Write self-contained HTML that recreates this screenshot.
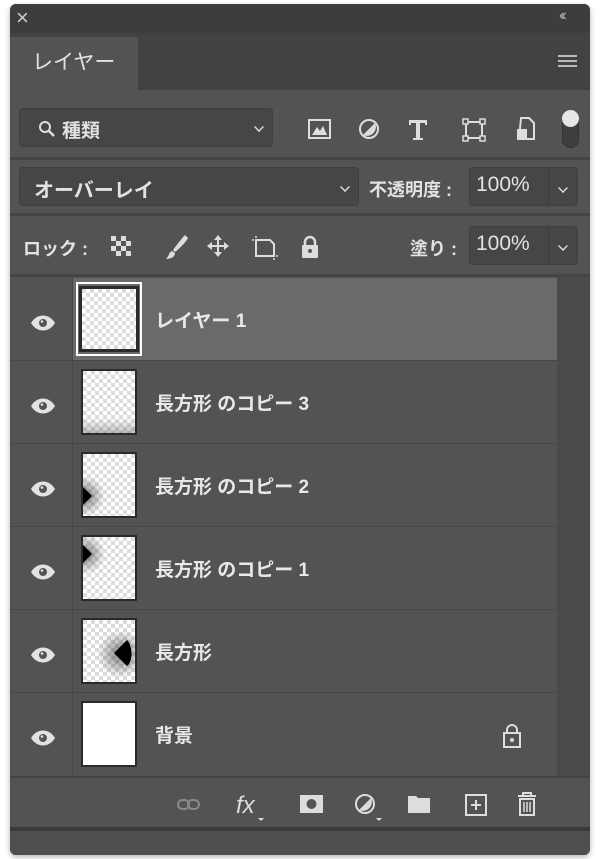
<!DOCTYPE html><html><head><meta charset="utf-8"><style>
*{margin:0;padding:0;box-sizing:border-box}
body{width:600px;height:859px;background:#fff;position:relative;overflow:hidden;font-family:"Liberation Sans","Noto Sans CJK JP",sans-serif;color:#e2e2e2}
.a{position:absolute}
.panel{left:10px;top:4px;width:580px;height:851px;background:#535353;border-radius:6px;overflow:hidden;box-shadow:0 2px 6px rgba(0,0,0,.3)}
.box{background:#464646;border:1px solid #3e3e3e;border-radius:4px}
.chev{width:10px;height:10px;border-right:2px solid #ddd;border-bottom:2px solid #ddd;transform:rotate(45deg) scale(.7)}
.thumb{width:56px;height:66px;border:2px solid #2a2a2a;background:repeating-conic-gradient(#fff 0 25%,#dcdcdc 0 50%) 0 0/8px 8px}
.nm{font-size:19px;left:155px;font-weight:bold;color:#e8e8e8}
.lb{font-weight:bold}
</style></head><body>
<div class="a panel">
 <div class="a" style="left:0;top:0;width:580px;height:29px;background:#3d3d3d"></div>
 <div class="a" style="left:6px;top:1px;font-size:22px;color:#ccc">×</div>
 <div class="a" style="left:549px;top:3px;font-size:16px;color:#bbb;letter-spacing:-3px">‹‹</div>
 <div class="a" style="left:0;top:29px;width:580px;height:57px;background:#424242"></div>
 <div class="a" style="left:0;top:33px;width:128px;height:53px;background:#535353"></div>
 <div class="a" style="left:22px;top:42px;font-size:21px">レイヤー</div>
 <div class="a" style="left:548px;top:51px;width:19px;height:12px;border-top:2px solid #bbb;border-bottom:2px solid #bbb"></div>
 <div class="a" style="left:548px;top:56px;width:19px;height:2px;background:#bbb"></div>
 <!-- row1 -->
 <div class="a box" style="left:9px;top:104px;width:254px;height:39px"></div>
 <svg class="a" style="left:28px;top:116px" width="18" height="18"><circle cx="7" cy="7" r="5" fill="none" stroke="#ddd" stroke-width="2"/><line x1="11" y1="11" x2="16" y2="16" stroke="#ddd" stroke-width="2.5"/></svg>
 <div class="a" style="left:52px;top:112px;font-size:19px;font-weight:bold">種類</div>
 <div class="a chev" style="left:244px;top:118px"></div>
 <svg class="a" style="left:297px;top:110px" width="270" height="40">
  <rect x="2" y="6" width="21" height="18" fill="none" stroke="#ddd" stroke-width="2"/><path d="M5 21l5-8 3 4 3-5 4 9z" fill="#ddd"/>
  <circle cx="62" cy="15" r="9" fill="none" stroke="#ddd" stroke-width="2"/><path d="M68 9a9 9 0 0 1-12 12z" fill="#ddd"/>
  <path d="M102 6h18v5h-2v-2h-5v15h3v2h-10v-2h3v-15h-5v2h-2z" fill="#ddd"/>
  <rect x="159" y="8" width="16" height="16" fill="none" stroke="#ddd" stroke-width="2"/><g fill="#535353" stroke="#ddd" stroke-width="1.5"><rect x="156" y="5" width="5" height="5"/><rect x="173" y="5" width="5" height="5"/><rect x="156" y="22" width="5" height="5"/><rect x="173" y="22" width="5" height="5"/></g>
  <path d="M214 4h8l5 5v16h-15z" fill="none" stroke="#ddd" stroke-width="2"/><rect x="210" y="15" width="10" height="11" fill="#ddd"/>
 </svg>
 <div class="a" style="left:552px;top:106px;width:17px;height:38px;border-radius:9px;background:#3e3e3e;border:1px solid #333"></div>
 <div class="a" style="left:552px;top:106px;width:17px;height:17px;border-radius:50%;background:#e6e6e6"></div>
 <div class="a" style="left:0;top:153px;width:580px;height:3px;background:#454545"></div>
 <!-- row2 -->
 <div class="a box" style="left:9px;top:163px;width:340px;height:39px"></div>
 <div class="a lb" style="left:24px;top:170px;font-size:20px">オーバーレイ</div>
 <div class="a chev" style="left:330px;top:178px"></div>
 <div class="a lb" style="left:359px;top:172px;font-size:18px">不透明度 :</div>
 <div class="a box" style="left:459px;top:163px;width:109px;height:39px"></div>
 <div class="a" style="left:538px;top:164px;width:1px;height:37px;background:#3a3a3a"></div>
 <div class="a" style="left:466px;top:169px;font-size:21px">100%</div>
 <div class="a chev" style="left:548px;top:179px"></div>
 <div class="a" style="left:0;top:209px;width:580px;height:3px;background:#454545"></div>
 <!-- row3 -->
 <div class="a lb" style="left:13px;top:231px;font-size:18px">ロック :</div>
 <svg class="a" style="left:100px;top:228px" width="210" height="32">
  <rect x="1" y="4" width="20" height="20" fill="#ddd"/><g fill="#555"><rect x="6" y="4" width="5" height="5"/><rect x="16" y="4" width="5" height="5"/><rect x="1" y="9" width="5" height="5"/><rect x="11" y="9" width="5" height="5"/><rect x="6" y="14" width="5" height="5"/><rect x="16" y="14" width="5" height="5"/><rect x="1" y="19" width="5" height="5"/><rect x="11" y="19" width="5" height="5"/></g>
  <path d="M75 3c-3 3-9 11-12 15l2 2c4-3 11-10 13-14z" fill="#ddd"/><path d="M62 19c-3 1-3 5-6 8 5 0 9-2 9-6z" fill="#ddd"/>
  <path d="M108 3l4 5h-3v5h5v-3l5 4-5 4v-3h-5v5h3l-4 5-4-5h3v-5h-5v3l-5-4 5-4v3h5v-5h-3z" fill="#ddd"/>
  <path d="M146 8h14l4 4v12h-18z" fill="none" stroke="#ddd" stroke-width="2"/><g stroke="#ddd" stroke-width="1.5"><line x1="142" y1="8" x2="144" y2="8"/><line x1="146" y1="4" x2="146" y2="6"/><line x1="164" y1="26" x2="164" y2="28"/><line x1="166" y1="24" x2="168" y2="24"/></g>
  <path d="M195 13v-3a5 5 0 0 1 10 0v3" fill="none" stroke="#ddd" stroke-width="2.5"/><rect x="192" y="13" width="16" height="13" rx="1" fill="#ddd"/><circle cx="200" cy="19" r="2" fill="#555"/>
 </svg>
 <div class="a lb" style="left:400px;top:231px;font-size:18px">塗り :</div>
 <div class="a box" style="left:459px;top:222px;width:109px;height:39px"></div>
 <div class="a" style="left:538px;top:223px;width:1px;height:37px;background:#3a3a3a"></div>
 <div class="a" style="left:466px;top:228px;font-size:21px">100%</div>
 <div class="a chev" style="left:548px;top:237px"></div>
 <div class="a" style="left:0;top:270px;width:580px;height:3px;background:#454545"></div>
 <!-- layers -->
 <div class="a" style="left:547px;top:273px;width:33px;height:499px;background:#4a4a4a"></div>
 <div class="a" style="left:62px;top:273px;width:1px;height:499px;background:#474747"></div>
 <div class="a" style="left:63px;top:274px;width:484px;height:82px;background:#6a6a6a"></div>
 <svg class="a" style="left:0;top:273px" width="60" height="500"><g fill="#e2e2e2">
  <g id="e"><path d="M21 46c6-10 18-10 24 0-6 10-18 10-24 0z"/><circle cx="33" cy="46" r="4" fill="#535353"/><circle cx="32" cy="44.5" r="1.3"/></g>
  <use href="#e" y="83"/><use href="#e" y="166"/><use href="#e" y="249"/><use href="#e" y="332"/><use href="#e" y="415"/></g></svg>
 <div class="a" style="left:0;top:356px;width:547px;height:1px;background:#474747"></div>
 <div class="a" style="left:0;top:439px;width:547px;height:1px;background:#474747"></div>
 <div class="a" style="left:0;top:522px;width:547px;height:1px;background:#474747"></div>
 <div class="a" style="left:0;top:605px;width:547px;height:1px;background:#474747"></div>
 <div class="a" style="left:0;top:688px;width:547px;height:1px;background:#474747"></div>
 <div class="a" style="left:66px;top:278px;width:66px;height:74px;border:2px solid #fff"></div>
 <div class="a thumb" style="left:69px;top:282px;width:60px;height:66px;border:3px solid #2a2a2a"></div>
 <div class="a nm" style="left:145px;top:302px">レイヤー 1</div>
 <div class="a thumb" style="left:71px;top:365px"></div>
 <div class="a" style="left:73px;top:415px;width:52px;height:14px;background:linear-gradient(transparent,rgba(0,0,0,.25))"></div>
 <div class="a nm" style="left:145px;top:385px">長方形 のコピー 3</div>
 <div class="a thumb" style="left:71px;top:448px"></div>
 <svg class="a" style="left:73px;top:450px" width="52" height="62"><defs><radialGradient id="g"><stop offset="0" stop-color="#000" stop-opacity=".5"/><stop offset="1" stop-color="#000" stop-opacity="0"/></radialGradient></defs><circle cx="2" cy="42" r="20" fill="url(#g)"/><path d="M0 33l9 9-9 9z" fill="#000"/></svg>
 <div class="a nm" style="left:145px;top:468px">長方形 のコピー 2</div>
 <div class="a thumb" style="left:71px;top:531px"></div>
 <svg class="a" style="left:73px;top:533px" width="52" height="62"><circle cx="2" cy="17" r="20" fill="url(#g)"/><path d="M0 8l9 9-9 9z" fill="#000"/></svg>
 <div class="a nm" style="left:145px;top:551px">長方形 のコピー 1</div>
 <div class="a thumb" style="left:71px;top:614px"></div>
 <svg class="a" style="left:73px;top:616px" width="52" height="62"><circle cx="38" cy="34" r="24" fill="url(#g)"/><path d="M44 20c6 6 6 22 0 26l-13-13z" fill="#000"/></svg>
 <div class="a nm" style="left:145px;top:634px">長方形</div>
 <div class="a thumb" style="left:71px;top:697px;background:#fff"></div>
 <div class="a nm" style="left:145px;top:717px">背景</div>
 <svg class="a" style="left:490px;top:719px" width="24" height="26"><path d="M7 10v-3a5 5 0 0 1 10 0v3" fill="none" stroke="#ddd" stroke-width="2"/><rect x="4" y="10" width="16" height="14" fill="none" stroke="#ddd" stroke-width="2"/><circle cx="12" cy="17" r="2" fill="#ddd"/></svg>
 <!-- bottom -->
 <div class="a" style="left:0;top:772px;width:580px;height:2px;background:#444"></div>
 <svg class="a" style="left:160px;top:782px" width="370" height="40">
  <g fill="none" stroke="#8a8a8a" stroke-width="2"><rect x="8" y="14" width="11" height="9" rx="4.5"/><rect x="18" y="14" width="11" height="9" rx="4.5"/></g>
  <text x="66" y="27" font-family="Liberation Sans" font-style="italic" font-size="24" fill="#ddd">fx</text><path d="M88 32h6l-3 3z" fill="#ddd"/>
  <rect x="130" y="9" width="23" height="18" fill="#ddd"/><circle cx="141.5" cy="18" r="5" fill="#555"/>
  <circle cx="195" cy="18" r="9" fill="none" stroke="#ddd" stroke-width="2"/><path d="M201 12a9 9 0 0 1-12 12z" fill="#ddd"/><path d="M206 32h6l-3 3z" fill="#ddd"/>
  <path d="M238 10h8l2 2h12v15h-22z" fill="#ddd"/>
  <rect x="296" y="9" width="20" height="20" fill="none" stroke="#ddd" stroke-width="2"/><path d="M306 14v10M301 19h10" stroke="#ddd" stroke-width="2"/>
  <path d="M348 10h18M353 10v-3h8v3M350 13h14v16h-14z" fill="none" stroke="#ddd" stroke-width="2"/><path d="M354 16v10M357 16v10M360 16v10" stroke="#ddd" stroke-width="1.5"/>
 </svg>
 <div class="a" style="left:0;top:823px;width:580px;height:4px;background:#3a3a3a"></div>
 <div class="a" style="left:0;top:827px;width:580px;height:24px;background:#4f4f4f"></div>
</div>
</body></html>
